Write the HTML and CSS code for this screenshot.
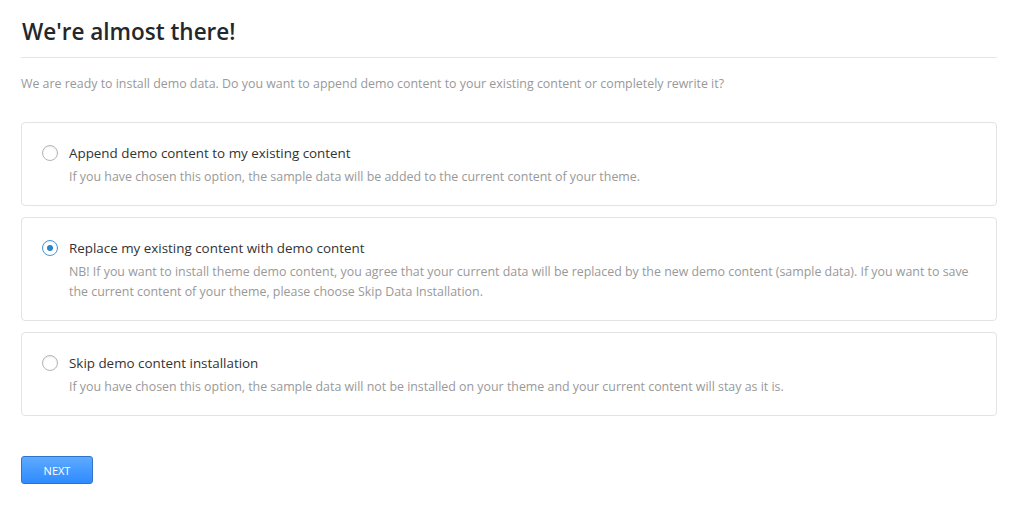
FILE: index.html
```html
<!DOCTYPE html>
<html>
<head>
<meta charset="utf-8">
<link rel="stylesheet" href="styles.css">
</head>
<body>
<div class="wrap">
  <h1 class="title">We're almost there!</h1>
  <p class="intro">We are ready to install demo data. Do you want to append demo content to your existing content or completely rewrite it?</p>
  <div class="options">
    <label class="card">
      <span class="radio"></span>
      <span class="body">
        <span class="name">Append demo content to my existing content</span>
        <span class="desc">If you have chosen this option, the sample data will be added to the current content of your theme.</span>
      </span>
    </label>
    <label class="card">
      <span class="radio checked"></span>
      <span class="body">
        <span class="name">Replace my existing content with demo content</span>
        <span class="desc">NB! If you want to install theme demo content, you agree that your current data will be replaced by the new demo content (sample data). If you want to save the current content of your theme, please choose Skip Data Installation.</span>
      </span>
    </label>
    <label class="card">
      <span class="radio"></span>
      <span class="body">
        <span class="name">Skip demo content installation</span>
        <span class="desc">If you have chosen this option, the sample data will not be installed on your theme and your current content will stay as it is.</span>
      </span>
    </label>
  </div>
  <button class="next">NEXT</button>
</div>
</body>
</html>
```
FILE: styles.css
```css
html, body { margin: 0; padding: 0; background: #fff; }
body { font-family: "Open Sans", "Noto Sans", sans-serif; font-size: 12.4px; color: #444; }
.wrap { padding: 15px 24px 0 21px; }
.title {
  margin: 0;
  font-size: 22.5px;
  font-weight: 600;
  color: #23282d;
  line-height: 34px;
  padding-left: 1px;
  padding-bottom: 8px;
  border-bottom: 1px solid #e5e5e5;
}
.intro { margin: 16px 0 0; color: #999; line-height: 20px; font-size: 12.4px; }
.options { display: flex; flex-direction: column; gap: 11px; margin-top: 28px; }
.card {
  display: flex;
  align-items: flex-start;
  gap: 11px;
  border: 1px solid #e3e3e3;
  border-radius: 4px;
  padding: 20px 20px 18px 20px;
}
.radio {
  flex: none;
  width: 14px; height: 14px;
  border: 1px solid #b4b4b4;
  border-radius: 50%;
  margin-top: 2px;
  display: flex; align-items: center; justify-content: center;
  box-shadow: inset 0 1px 2px rgba(0,0,0,0.08);
}
.radio.checked { border-color: #4a96d8; }
.radio.checked::after {
  content: "";
  width: 6px; height: 6px; border-radius: 50%;
  background: #2a84c6;
}
.body { display: flex; flex-direction: column; gap: 4px; }
.name { font-size: 13.4px; color: #333; line-height: 20px; }
.desc { color: #999; line-height: 20px; font-size: 12.4px; }
.next {
  margin-top: 40px;
  width: 72px; height: 28px;
  border: 1px solid #2f74c9;
  border-radius: 3px;
  background: linear-gradient(#5eaaff, #2e8bff);
  color: #fff;
  font-family: "Open Sans", "Noto Sans", sans-serif;
  font-size: 11px;
  padding: 0;
  cursor: pointer;
}
```
